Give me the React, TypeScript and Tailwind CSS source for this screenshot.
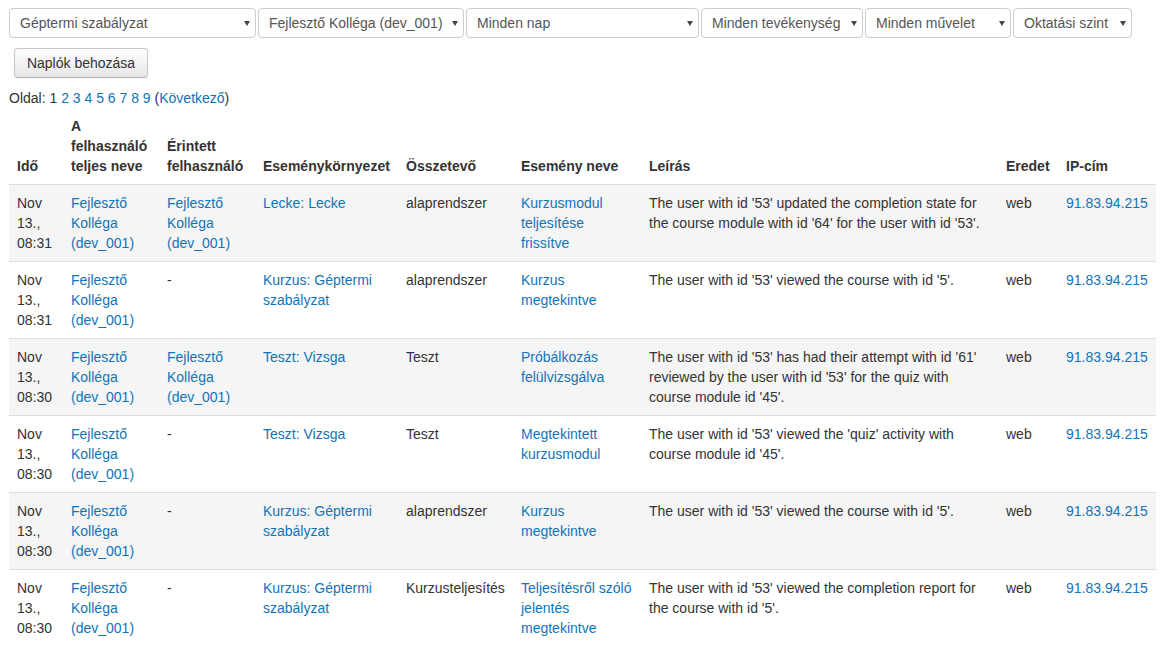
import { ReactNode } from 'react';

type Row = {
  time: string[];
  user: string[];
  affected: string[] | null;
  context: string[];
  component: string;
  event: string[];
  desc: string[];
  origin: string;
  ip: string;
};

const rows: Row[] = [
  {
    time: ['Nov', '13.,', '08:31'],
    user: ['Fejlesztő', 'Kolléga', '(dev_001)'],
    affected: ['Fejlesztő', 'Kolléga', '(dev_001)'],
    context: ['Lecke: Lecke'],
    component: 'alaprendszer',
    event: ['Kurzusmodul', 'teljesítése', 'frissítve'],
    desc: [
      "The user with id '53' updated the completion state for",
      "the course module with id '64' for the user with id '53'.",
    ],
    origin: 'web',
    ip: '91.83.94.215',
  },
  {
    time: ['Nov', '13.,', '08:31'],
    user: ['Fejlesztő', 'Kolléga', '(dev_001)'],
    affected: null,
    context: ['Kurzus: Géptermi', 'szabályzat'],
    component: 'alaprendszer',
    event: ['Kurzus', 'megtekintve'],
    desc: ["The user with id '53' viewed the course with id '5'."],
    origin: 'web',
    ip: '91.83.94.215',
  },
  {
    time: ['Nov', '13.,', '08:30'],
    user: ['Fejlesztő', 'Kolléga', '(dev_001)'],
    affected: ['Fejlesztő', 'Kolléga', '(dev_001)'],
    context: ['Teszt: Vizsga'],
    component: 'Teszt',
    event: ['Próbálkozás', 'felülvizsgálva'],
    desc: [
      "The user with id '53' has had their attempt with id '61'",
      "reviewed by the user with id '53' for the quiz with",
      "course module id '45'.",
    ],
    origin: 'web',
    ip: '91.83.94.215',
  },
  {
    time: ['Nov', '13.,', '08:30'],
    user: ['Fejlesztő', 'Kolléga', '(dev_001)'],
    affected: null,
    context: ['Teszt: Vizsga'],
    component: 'Teszt',
    event: ['Megtekintett', 'kurzusmodul'],
    desc: [
      "The user with id '53' viewed the 'quiz' activity with",
      "course module id '45'.",
    ],
    origin: 'web',
    ip: '91.83.94.215',
  },
  {
    time: ['Nov', '13.,', '08:30'],
    user: ['Fejlesztő', 'Kolléga', '(dev_001)'],
    affected: null,
    context: ['Kurzus: Géptermi', 'szabályzat'],
    component: 'alaprendszer',
    event: ['Kurzus', 'megtekintve'],
    desc: ["The user with id '53' viewed the course with id '5'."],
    origin: 'web',
    ip: '91.83.94.215',
  },
  {
    time: ['Nov', '13.,', '08:30'],
    user: ['Fejlesztő', 'Kolléga', '(dev_001)'],
    affected: null,
    context: ['Kurzus: Géptermi', 'szabályzat'],
    component: 'Kurzusteljesítés',
    event: ['Teljesítésről szóló', 'jelentés', 'megtekintve'],
    desc: [
      "The user with id '53' viewed the completion report for",
      "the course with id '5'.",
    ],
    origin: 'web',
    ip: '91.83.94.215',
  },
];

const selects = [
  { label: 'Géptermi szabályzat', w: 'w-[247px]' },
  { label: 'Fejlesztő Kolléga (dev_001)', w: 'w-[206px]' },
  { label: 'Minden nap', w: 'w-[233px]' },
  { label: 'Minden tevékenység', w: 'w-[162px]' },
  { label: 'Minden művelet', w: 'w-[146px]' },
  { label: 'Oktatási szint', w: 'w-[119px]' },
];

function Lines({ lines, link }: { lines: string[]; link?: boolean }) {
  return (
    <span className={link ? 'text-[#1174b8]' : ''}>
      {lines.map((l, i) => (
        <span key={i} className="block">
          {l}
        </span>
      ))}
    </span>
  );
}

function Th({ children, w }: { children: ReactNode; w: string }) {
  return (
    <th className={`${w} px-2 pt-2 pb-2 text-left align-bottom font-bold border-b border-[#ddd]`}>
      {children}
    </th>
  );
}

export default function App() {
  return (
    <div className="min-h-screen bg-white text-[14px] leading-5 text-[#333] font-['Liberation_Sans',Arial,sans-serif]">
      <div className="pl-[9px] pt-2">
        <div className="flex gap-[2px]">
          {selects.map((s) => (
            <div
              key={s.label}
              className={`${s.w} h-[30px] flex items-center justify-between pl-[10px] pr-[5px] border border-[#ccc] rounded-[4px] text-[#555] bg-white whitespace-nowrap`}
            >
              <span>{s.label}</span>
              <svg width="6" height="5" viewBox="0 0 6 5" className="shrink-0 mt-[1px]">
                <path d="M0 0h6L3 5z" fill="#444" />
              </svg>
            </div>
          ))}
        </div>

        <button className="mt-[10px] ml-[5px] h-[30px] w-[134px] rounded-[4px] border border-[#c8c8c8] border-b-[#b3b3b3] bg-gradient-to-b from-white to-[#e6e6e6] text-[#333] shadow-[inset_0_1px_0_rgba(255,255,255,0.2),0_1px_2px_rgba(0,0,0,0.05)]">
          Naplók behozása
        </button>

        <div className="mt-[10px]">
          Oldal: 1{' '}
          <span className="text-[#1174b8]">2 3 4 5 6 7 8 9</span> (
          <span className="text-[#1174b8]">Következő</span>)
        </div>

        <table className="table-fixed border-collapse w-[1147px]">
          <thead>
            <tr>
              <Th w="w-[54px]">Idő</Th>
              <Th w="w-[96px]">A felhasználó teljes neve</Th>
              <Th w="w-[96px]">Érintett felhasználó</Th>
              <Th w="w-[143px]">Eseménykörnyezet</Th>
              <Th w="w-[115px]">Összetevő</Th>
              <Th w="w-[128px]">Esemény neve</Th>
              <Th w="w-[357px]">Leírás</Th>
              <Th w="w-[60px]">Eredet</Th>
              <Th w="w-[98px]">IP-cím</Th>
            </tr>
          </thead>
          <tbody>
            {rows.map((r, i) => (
              <tr key={i} className={i % 2 === 0 ? 'bg-[#f5f5f5]' : 'bg-white'}>
                <td className="px-2 py-2 align-top border-t border-[#ddd]">
                  <Lines lines={r.time} />
                </td>
                <td className="px-2 py-2 align-top border-t border-[#ddd]">
                  <Lines lines={r.user} link />
                </td>
                <td className="px-2 py-2 align-top border-t border-[#ddd]">
                  {r.affected ? <Lines lines={r.affected} link /> : '-'}
                </td>
                <td className="px-2 py-2 align-top border-t border-[#ddd]">
                  <Lines lines={r.context} link />
                </td>
                <td className="px-2 py-2 align-top border-t border-[#ddd]">{r.component}</td>
                <td className="px-2 py-2 align-top border-t border-[#ddd]">
                  <span className="block min-h-[60px]">
                    <Lines lines={r.event} link />
                  </span>
                </td>
                <td className="px-2 py-2 align-top border-t border-[#ddd]">
                  <Lines lines={r.desc} />
                </td>
                <td className="px-2 py-2 align-top border-t border-[#ddd]">{r.origin}</td>
                <td className="px-2 py-2 align-top border-t border-[#ddd] text-[#1174b8]">{r.ip}</td>
              </tr>
            ))}
          </tbody>
        </table>
      </div>
    </div>
  );
}
